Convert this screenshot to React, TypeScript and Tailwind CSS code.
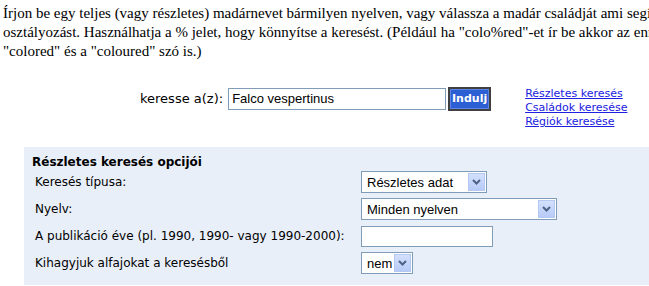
import React from "react";

const Chevron = () => (
  <svg width="9" height="6" viewBox="0 0 9 6">
    <path d="M1 1 L4.5 4.5 L8 1" fill="none" stroke="#4d6185" strokeWidth="2" />
  </svg>
);

const Select = ({ value, width }: { value: string; width: string }) => (
  <div
    className={`flex items-center h-[22px] border border-[#7f9db9] bg-white ${width}`}
    style={{ fontFamily: '"Liberation Sans", Arial, sans-serif' }}
  >
    <span className="flex-1 pl-[5px] text-[13px] text-black leading-none">{value}</span>
    <span className="flex items-center justify-center w-[17px] h-[18px] mr-[1px] bg-gradient-to-b from-[#d3e0fd] to-[#b7cbf8] border border-[#b4c8f3]">
      <Chevron />
    </span>
  </div>
);

export default function App() {
  return (
    <div className="w-[649px] h-[286px] overflow-hidden bg-white">
      <div className="w-[760px]">
        <div
          className="pl-[3px] pt-[4px] text-[15px] leading-[19px] text-black whitespace-nowrap"
          style={{ fontFamily: '"Liberation Serif", "Times New Roman", serif' }}
        >
          <div>
            Írjon be egy teljes (vagy részletes) madárnevet bármilyen nyelven, vagy válassza a madár családját ami segít az
          </div>
          <div>
            osztályozást. Használhatja a % jelet, hogy könnyítse a keresést. (Például ha "colo%red"-et ír be akkor az  ennek
          </div>
          <div>"colored" és a "coloured" szó is.)</div>
        </div>

        <div className="flex items-start mt-[26px] pl-[140px]">
          <div className="flex items-center h-[24px]">
            <span
              className="text-[13px] text-black mr-[5px]"
              style={{ fontFamily: '"DejaVu Sans", Verdana, sans-serif' }}
            >
              keresse a(z):
            </span>
            <div
              className="w-[218px] h-[22px] border border-[#7f9db9] bg-white flex items-center pl-[3px] text-[13px]"
              style={{ fontFamily: '"Liberation Sans", Arial, sans-serif' }}
            >
              Falco vespertinus
            </div>
            <button
              className="ml-[2px] w-[43px] h-[24px] p-0 bg-[#2c5fd4] text-white text-[11px] font-bold border-2 border-[#404040] shadow-[inset_0_0_0_1px_#5b84e6]"
              style={{ fontFamily: '"DejaVu Sans", Tahoma, sans-serif' }}
            >
              Indulj
            </button>
          </div>
          <div
            className="ml-[34px] flex flex-col text-[11px] leading-[14px]"
            style={{ fontFamily: '"DejaVu Sans", Verdana, sans-serif' }}
          >
            <a className="text-[#2020e0] underline">Részletes keresés</a>
            <a className="text-[#2020e0] underline">Családok keresése</a>
            <a className="text-[#2020e0] underline">Régiók keresése</a>
          </div>
        </div>

        <div
          className="ml-[24px] mt-[18px] bg-[#e9eff9] pl-[8px] pt-[7px] pb-[11px] text-[12px] text-black"
          style={{ fontFamily: '"DejaVu Sans", Verdana, sans-serif' }}
        >
          <div className="font-bold text-[12px] leading-[16px]">Részletes keresés opcijói</div>
          <div className="grid grid-cols-[329px_auto] gap-y-[5px] mt-[1px]">
            <div className="pl-[3px] flex items-center h-[22px]">Keresés típusa:</div>
            <div className="flex items-center"><Select value="Részletes adat" width="w-[126px]" /></div>
            <div className="pl-[3px] flex items-center h-[22px]">Nyelv:</div>
            <div className="flex items-center"><Select value="Minden nyelven" width="w-[196px]" /></div>
            <div className="pl-[3px] flex items-center h-[22px]">A publikáció éve (pl. 1990, 1990- vagy 1990-2000):</div>
            <div className="flex items-center">
              <div className="w-[132px] h-[21px] border border-[#7f9db9] bg-white" />
            </div>
            <div className="pl-[3px] flex items-center h-[22px]">Kihagyjuk alfajokat a keresésből</div>
            <div className="flex items-center"><Select value="nem" width="w-[52px]" /></div>
          </div>
        </div>
      </div>
    </div>
  );
}
